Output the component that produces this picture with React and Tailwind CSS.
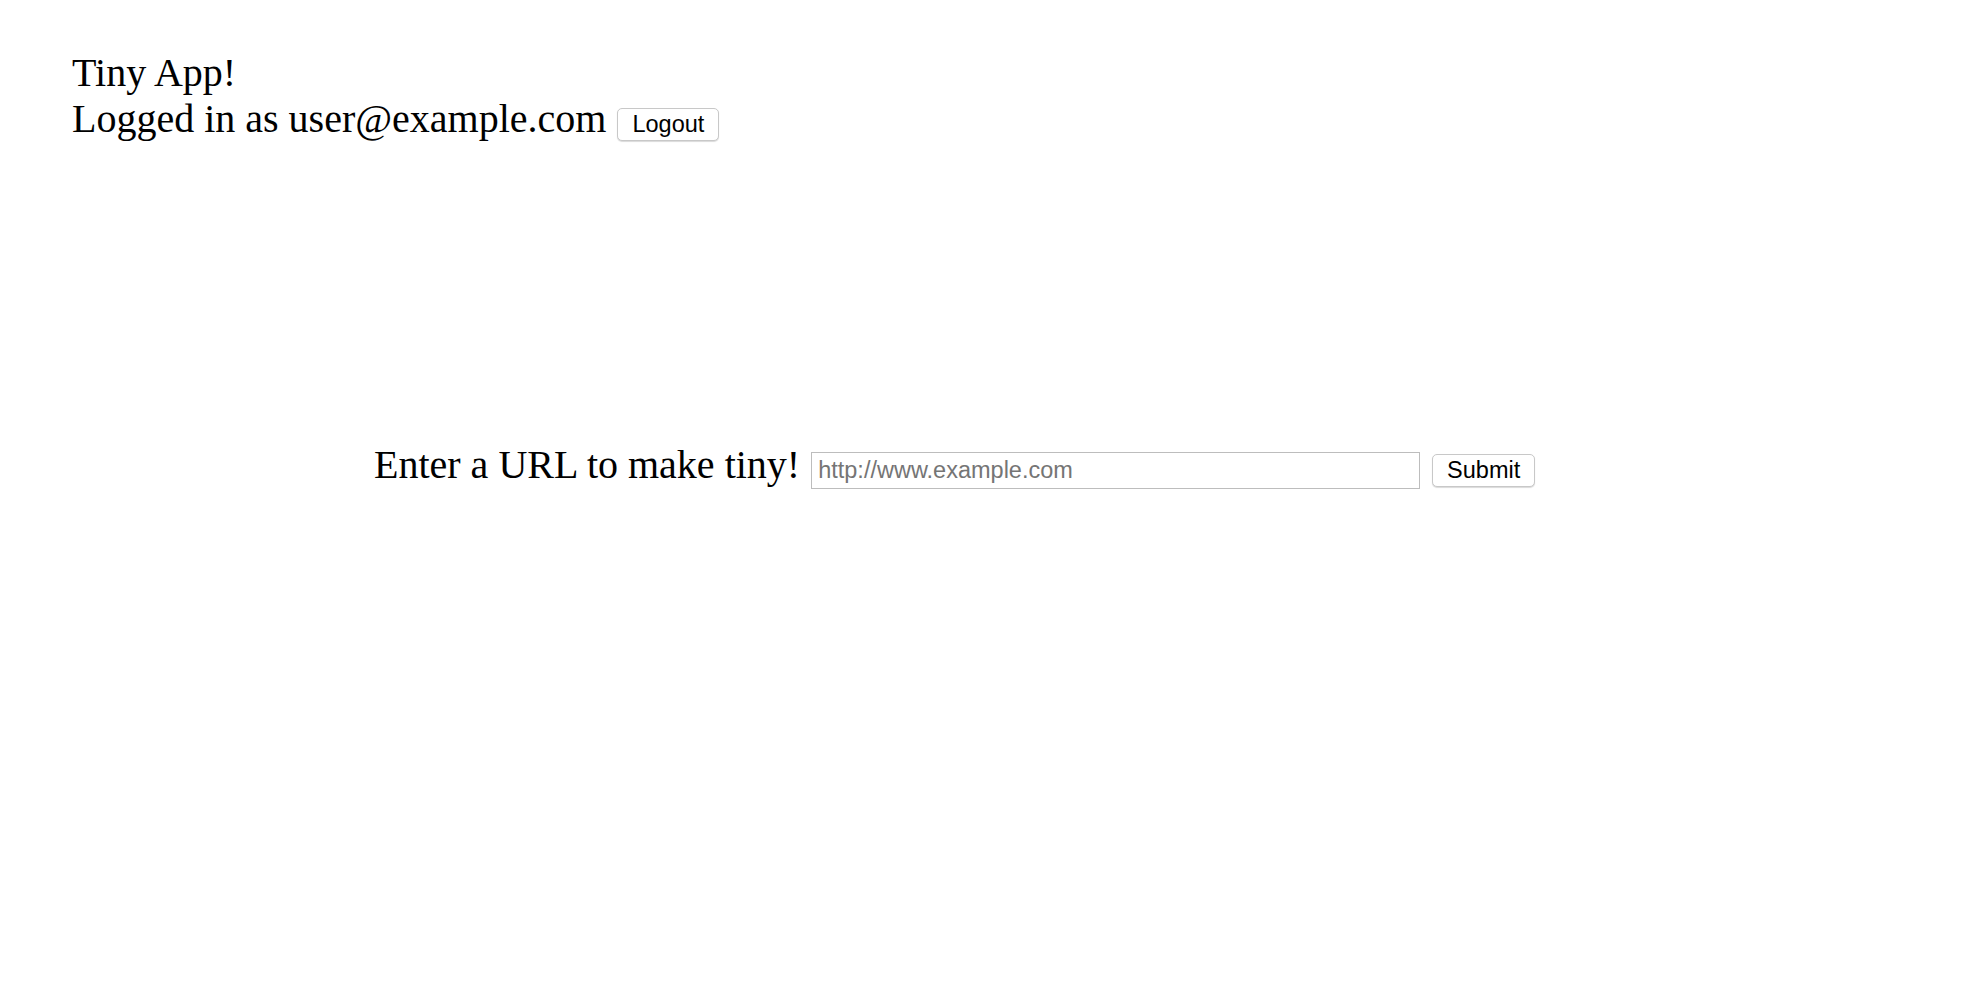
export default function App() {
  return (
    <div className="min-h-screen bg-white text-black text-[40px] leading-[46px] font-['Liberation_Serif','Times_New_Roman',serif]">
      {/* Header */}
      <div className="pt-[50px] pl-[72px]">
        <div>Tiny App!</div>
        <div className="flex items-baseline gap-[11px]">
          <span>Logged in as user@example.com</span>
          <button className="h-[33px] px-[14px] bg-white border border-[#c8c8c8] rounded-[5px] shadow-[0_1px_1px_rgba(0,0,0,0.15)] text-[23.5px] font-['Liberation_Sans',Arial,sans-serif] leading-none">
            Logout
          </button>
        </div>
      </div>

      {/* URL form */}
      <form className="mt-[300px] pl-[374px] flex items-baseline" onSubmit={(e) => e.preventDefault()}>
        <label htmlFor="longURL">Enter a URL to make tiny!</label>
        <input
          id="longURL"
          type="text"
          placeholder="http://www.example.com"
          className="ml-[11px] w-[609px] h-[37px] px-[6px] border border-[#bdbdbd] text-[23.5px] leading-normal font-['Liberation_Sans',Arial,sans-serif] placeholder:text-[#757575] outline-none"
        />
        <button
          type="submit"
          className="ml-[12px] h-[33px] w-[103px] bg-white border border-[#c8c8c8] rounded-[5px] shadow-[0_1px_1px_rgba(0,0,0,0.15)] text-[23.5px] font-['Liberation_Sans',Arial,sans-serif] leading-none"
        >
          Submit
        </button>
      </form>
    </div>
  )
}
